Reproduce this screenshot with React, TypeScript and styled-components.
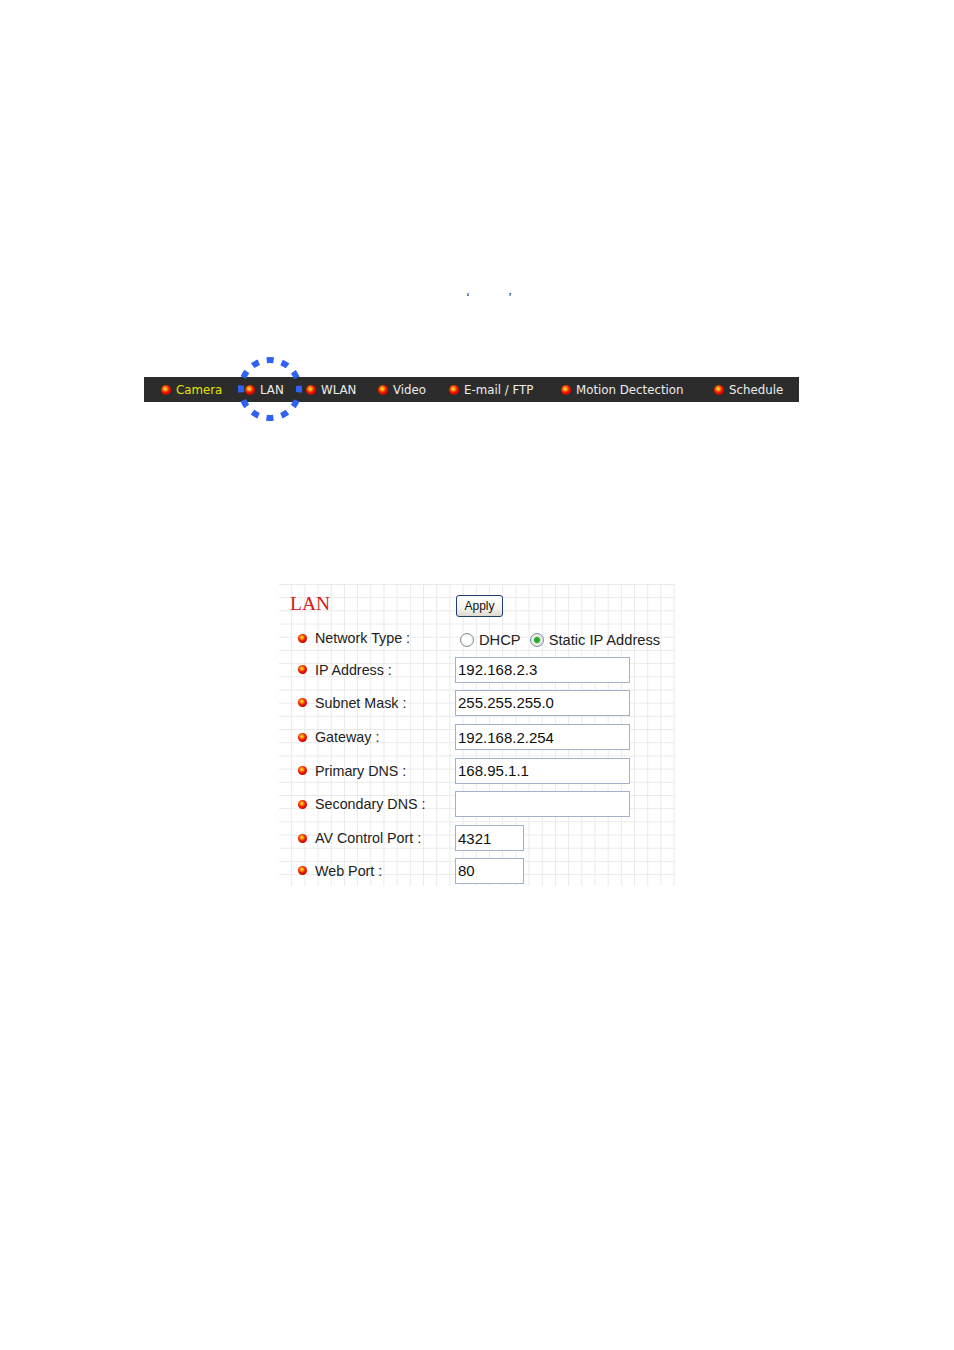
import React from 'react';
import styled, { createGlobalStyle } from 'styled-components';

const GlobalStyle = createGlobalStyle`
    html, body {
        margin: 0;
        padding: 0;
        background: #ffffff;
    }
`;

const Page = styled.div`
    width: 954px;
    height: 1350px;
    display: flex;
    flex-direction: column;
    align-items: flex-start;
`;

const QuoteLine = styled.div`
    margin: 291px 0 0 466px;
    display: flex;
    gap: 38px;
    font-family: "Liberation Serif", serif;
    font-size: 12px;
    line-height: 12px;
    color: #222;
`;

const NavBar = styled.div`
    margin: 74px 0 0 144px;
    width: 655px;
    height: 25px;
    background: #2c2c2c;
    box-sizing: border-box;
    padding-left: 17px;
    display: grid;
    grid-template-columns: 84px 61px 72px 71px 112px 153px 1fr;
    align-items: center;
`;

const NavItem = styled.div<{ active?: boolean }>`
    position: relative;
    display: flex;
    align-items: center;
    gap: 5px;
    height: 25px;
    font-family: "DejaVu Sans", Verdana, sans-serif;
    font-size: 11.8px;
    color: ${p => (p.active ? '#e4e400' : '#ececec')};
    white-space: nowrap;
`;

const Orb = styled.span<{ size: number }>`
    display: inline-block;
    flex: none;
    width: ${p => p.size}px;
    height: ${p => p.size}px;
    border-radius: 50%;
    background: radial-gradient(circle at 42% 38%, #fff08a 0%, #ff9a00 20%, #f01a00 45%, #d00000 72%, #7a0000 100%);
`;

const Marker = styled.svg`
    position: absolute;
    left: -10px;
    top: -23px;
    width: 70px;
    height: 70px;
    pointer-events: none;
`;

const Panel = styled.div`
    margin: 182px 0 0 279px;
    width: 396px;
    height: 302px;
    box-sizing: border-box;
    background-color: #ffffff;
    background-image:
        linear-gradient(to right, #e9e9e9 1px, transparent 1px),
        linear-gradient(to bottom, #e9e9e9 1px, transparent 1px);
    background-size: 13.2px 13.2px;
    background-position: -1px 0;
    display: grid;
    grid-template-columns: 176px 1fr;
    align-content: start;
`;

const TitleCell = styled.div`
    height: 38px;
    display: flex;
    align-items: center;
    padding-left: 11px;
    padding-top: 2px;
    box-sizing: border-box;
    font-family: "Liberation Serif", serif;
    font-size: 19.5px;
    color: #d42020;
`;

const ApplyCell = styled.div`
    height: 38px;
    display: flex;
    align-items: center;
    padding-left: 1px;
    padding-top: 6px;
    box-sizing: border-box;
`;

const ApplyButton = styled.button`
    width: 47px;
    height: 22px;
    padding: 0;
    border: 1px solid #1f3d6e;
    border-radius: 3px;
    background: linear-gradient(to bottom, #ffffff 0%, #f4f3ee 60%, #dcdad0 100%);
    font-family: "Liberation Sans", Arial, sans-serif;
    font-size: 12px;
    color: #111;
`;

const LabelCell = styled.div<{ h: number }>`
    height: ${p => p.h}px;
    display: flex;
    align-items: center;
    gap: 8px;
    padding-left: 19px;
    box-sizing: border-box;
    font-family: "Liberation Sans", Arial, sans-serif;
    font-size: 14.3px;
    color: #222;
`;

const ValueCell = styled.div<{ h: number }>`
    height: ${p => p.h}px;
    display: flex;
    align-items: center;
    box-sizing: border-box;
`;

const TextBox = styled.div<{ w: number }>`
    width: ${p => p.w}px;
    height: 26px;
    box-sizing: border-box;
    border: 1px solid #9fb2c8;
    background: #ffffff;
    padding-left: 2px;
    display: flex;
    align-items: center;
    font-family: "Liberation Sans", Arial, sans-serif;
    font-size: 15px;
    color: #111;
`;

const RadioGroup = styled.div`
    display: flex;
    align-items: center;
    padding-left: 5px;
    padding-top: 3px;
    font-family: "Liberation Sans", Arial, sans-serif;
    font-size: 14.7px;
    color: #222;
`;

const RadioOption = styled.label`
    display: flex;
    align-items: center;
    gap: 5px;
    margin-right: 9px;
`;

const RadioDot = styled.span<{ checked?: boolean }>`
    width: 14px;
    height: 14px;
    border-radius: 50%;
    box-sizing: border-box;
    border: 1px solid #7d8c9a;
    background: ${p =>
        p.checked
            ? 'radial-gradient(circle, #2aa82a 0 2.5px, #8fd08f 3px, #f3f3f0 4px, #d8d8d0 100%)'
            : 'radial-gradient(circle, #ffffff 0 3px, #e8e8e2 100%)'};
`;

const rows = [
    { label: 'Network Type :', h: 32, radio: true },
    { label: 'IP Address :', h: 31, value: '192.168.2.3', w: 175 },
    { label: 'Subnet Mask :', h: 35, value: '255.255.255.0', w: 175 },
    { label: 'Gateway :', h: 34, value: '192.168.2.254', w: 175 },
    { label: 'Primary DNS :', h: 33, value: '168.95.1.1', w: 175 },
    { label: 'Secondary DNS :', h: 34, value: '', w: 175 },
    { label: 'AV Control Port :', h: 34, value: '4321', w: 69 },
    { label: 'Web Port :', h: 31, value: '80', w: 69 },
];

const navItems = ['Camera', 'LAN', 'WLAN', 'Video', 'E-mail / FTP', 'Motion Dectection', 'Schedule'];

export default function App() {
    return (
        <Page>
            <GlobalStyle />
            <QuoteLine>
                <span>‘</span>
                <span>’</span>
            </QuoteLine>
            <NavBar>
                {navItems.map((item, i) => (
                    <NavItem key={item} active={i === 0}>
                        <Orb size={10} />
                        <span>{item}</span>
                        {item === 'LAN' && (
                            <Marker viewBox="0 0 70 70">
                                <circle
                                    cx="35"
                                    cy="35"
                                    r="29"
                                    fill="none"
                                    stroke="#2f62f2"
                                    strokeWidth="6"
                                    strokeDasharray="7 8.18"
                                    strokeDashoffset="3.5"
                                />
                            </Marker>
                        )}
                    </NavItem>
                ))}
            </NavBar>
            <Panel>
                <TitleCell>LAN</TitleCell>
                <ApplyCell>
                    <ApplyButton>Apply</ApplyButton>
                </ApplyCell>
                {rows.map(r => (
                    <React.Fragment key={r.label}>
                        <LabelCell h={r.h}>
                            <Orb size={9} />
                            <span>{r.label}</span>
                        </LabelCell>
                        <ValueCell h={r.h}>
                            {r.radio ? (
                                <RadioGroup>
                                    <RadioOption>
                                        <RadioDot />
                                        DHCP
                                    </RadioOption>
                                    <RadioOption>
                                        <RadioDot checked />
                                        Static IP Address
                                    </RadioOption>
                                </RadioGroup>
                            ) : (
                                <TextBox w={r.w!}>{r.value}</TextBox>
                            )}
                        </ValueCell>
                    </React.Fragment>
                ))}
            </Panel>
        </Page>
    );
}
